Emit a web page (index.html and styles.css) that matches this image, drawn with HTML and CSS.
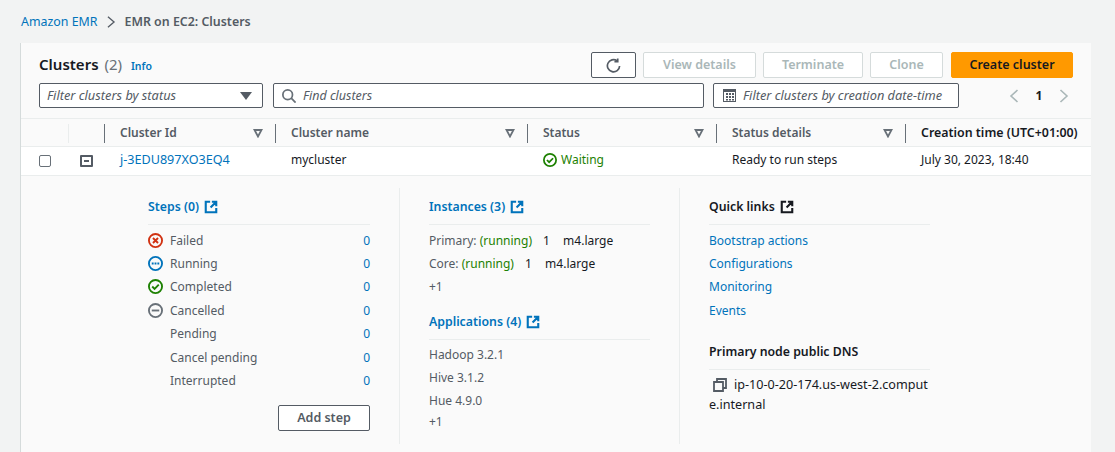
FILE: index.html
```html
<!DOCTYPE html>
<html lang="en">
<head>
<meta charset="UTF-8">
<title>EMR on EC2: Clusters</title>
<link rel="stylesheet" href="styles.css">
</head>
<body>

<svg class="sprites" width="0" height="0">
    <symbol id="ext" viewBox="0 0 16 16"><path d="M7 2H2v12h12V9M9 2h5v5M14 2 7.500 8.500" fill="none" stroke="currentColor" stroke-width="2.400"/></symbol>
    <symbol id="failed" viewBox="0 0 16 16"><circle cx="8" cy="8" r="7" fill="none" stroke="#d13212" stroke-width="2"/><path d="m5.300 5.300 5.400 5.400m0-5.400-5.400 5.400" stroke="#d13212" stroke-width="2"/></symbol>
    <symbol id="running" viewBox="0 0 16 16"><circle cx="8" cy="8" r="7" fill="none" stroke="#0073bb" stroke-width="2"/><path d="M4 8h8" stroke="#0073bb" stroke-width="2" stroke-dasharray="2 1"/></symbol>
    <symbol id="done" viewBox="0 0 16 16"><circle cx="8" cy="8" r="7" fill="none" stroke="#1d8102" stroke-width="2"/><path d="m4.500 8 2.500 2.500 4.500-4.500" fill="none" stroke="#1d8102" stroke-width="2"/></symbol>
    <symbol id="stopped" viewBox="0 0 16 16"><circle cx="8" cy="8" r="7" fill="none" stroke="#687078" stroke-width="2"/><path d="M4 8h8" stroke="#687078" stroke-width="2"/></symbol>
    <symbol id="sort" viewBox="0 0 10 10"><path d="M1.500 2h7L5 8.500z" fill="none" stroke="#687078" stroke-width="1.800"/></symbol>
</svg>

<nav class="crumbs">
    <a class="link" href="#">Amazon EMR</a>
    <svg class="crumb-sep" viewBox="0 0 10 16"><path d="m1.500 2 7 6-7 6" fill="none" stroke="#545b64" stroke-width="1.500"/></svg>
    <span class="crumb-here">EMR on EC2: Clusters</span>
</nav>

<main class="panel">
    <div class="panel-top">
        <h1 class="title">Clusters <span class="count">(2)</span> <a class="info" href="#">Info</a></h1>
        <div class="actions">
            <button class="btn btn-icon" type="button">
                <svg width="15" height="15" viewBox="0 0 16 16"><path d="M14.500 8.500A6.500 6.500 0 1 1 11.800 3M12.500 .5v3.500H9" fill="none" stroke="#545b64" stroke-width="1.800"/></svg>
            </button>
            <button class="btn btn-off btn-view" type="button">View details</button>
            <button class="btn btn-off btn-term" type="button">Terminate</button>
            <button class="btn btn-off btn-clone" type="button">Clone</button>
            <button class="btn btn-main" type="button">Create cluster</button>
        </div>
    </div>

    <div class="filters">
        <div class="field field-status">
            <span class="hint">Filter clusters by status</span>
            <svg class="caret" width="12" height="8" viewBox="0 0 12 8"><path d="M0 0h12L6 8z" fill="#545b64"/></svg>
        </div>
        <div class="field field-find">
            <svg width="14" height="14" viewBox="0 0 16 16"><circle cx="6.500" cy="6.500" r="5.500" fill="none" stroke="#687078" stroke-width="2"/><path d="m10.500 10.500 5 5" stroke="#687078" stroke-width="2"/></svg>
            <span class="hint hint-find">Find clusters</span>
        </div>
        <div class="field field-date">
            <svg width="13" height="13" viewBox="0 0 13 13"><path d="M0 0h13v13H0z" fill="#545b64"/><path d="M1 3h11v9H1z" fill="#fff"/><path d="M3 4h2v2H3zM6 4h2v2H6zM9 4h2v2H9zM3 7h2v2H3zM6 7h2v2H6zM9 7h2v2H9zM3 10h2v1.500H3zM6 10h2v1.500H6zM9 10h2v1.500H9z" fill="#545b64"/></svg>
            <span class="hint">Filter clusters by creation date-time</span>
        </div>
        <div class="pager">
            <svg width="10" height="14" viewBox="0 0 10 14"><path d="M8.500 1 2 7l6.500 6" fill="none" stroke="#aab7b8" stroke-width="1.600"/></svg>
            <b>1</b>
            <svg width="10" height="14" viewBox="0 0 10 14"><path d="m1.500 1 6.500 6-6.500 6" fill="none" stroke="#aab7b8" stroke-width="1.600"/></svg>
        </div>
    </div>

    <div class="grid grid-head">
        <div class="th th-plain"></div>
        <div class="th th-plain th-faint"></div>
        <div class="th">Cluster Id <svg class="sort"><use href="#sort"/></svg></div>
        <div class="th">Cluster name <svg class="sort"><use href="#sort"/></svg></div>
        <div class="th">Status <svg class="sort"><use href="#sort"/></svg></div>
        <div class="th">Status details <svg class="sort"><use href="#sort"/></svg></div>
        <div class="th th-last">Creation time (UTC+01:00) <svg class="sort"><use href="#sort"/></svg></div>
    </div>

    <div class="grid grid-row">
        <div class="td td-check"><span class="checkbox"></span></div>
        <div class="td td-toggle"><span class="toggle"></span></div>
        <div class="td td-id"><a class="link" href="#">j-3EDU897XO3EQ4</a></div>
        <div class="td">mycluster</div>
        <div class="td td-waiting"><svg width="14" height="14"><use href="#done"/></svg> Waiting</div>
        <div class="td">Ready to run steps</div>
        <div class="td">July 30, 2023, 18:40</div>
    </div>

    <div class="detail">
        <section class="col">
            <h2 class="sub sub-link">Steps (0) <svg class="ext"><use href="#ext"/></svg></h2>
            <ul class="list">
                <li><svg class="st"><use href="#failed"/></svg><span>Failed</span><a class="link" href="#">0</a></li>
                <li><svg class="st"><use href="#running"/></svg><span>Running</span><a class="link" href="#">0</a></li>
                <li><svg class="st"><use href="#done"/></svg><span>Completed</span><a class="link" href="#">0</a></li>
                <li><svg class="st"><use href="#stopped"/></svg><span>Cancelled</span><a class="link" href="#">0</a></li>
                <li><i class="st"></i><span>Pending</span><a class="link" href="#">0</a></li>
                <li><i class="st"></i><span>Cancel pending</span><a class="link" href="#">0</a></li>
                <li><i class="st"></i><span>Interrupted</span><a class="link" href="#">0</a></li>
            </ul>
            <div class="add-row"><button class="btn btn-add" type="button">Add step</button></div>
        </section>

        <section class="col">
            <h2 class="sub sub-link">Instances (3) <svg class="ext"><use href="#ext"/></svg></h2>
            <p class="line">Primary: <span class="ok">(running)</span> <span class="val">1</span> <span class="val val-type">m4.large</span></p>
            <p class="line">Core: <span class="ok">(running)</span> <span class="val">1</span> <span class="val val-type">m4.large</span></p>
            <p class="line">+1</p>
            <h2 class="sub sub-link sub-next">Applications (4) <svg class="ext"><use href="#ext"/></svg></h2>
            <p class="line">Hadoop 3.2.1</p>
            <p class="line">Hive 3.1.2</p>
            <p class="line">Hue 4.9.0</p>
            <p class="line line-more">+1</p>
        </section>

        <section class="col">
            <h2 class="sub">Quick links <svg class="ext"><use href="#ext"/></svg></h2>
            <p class="line"><a class="link" href="#">Bootstrap actions</a></p>
            <p class="line"><a class="link" href="#">Configurations</a></p>
            <p class="line"><a class="link" href="#">Monitoring</a></p>
            <p class="line"><a class="link" href="#">Events</a></p>
            <h2 class="sub sub-dns">Primary node public DNS</h2>
            <p class="dns">
                <svg class="copy" width="14" height="14" viewBox="0 0 14 14"><path d="M4 4V1h9v9h-3M1 4h9v9H1z" fill="none" stroke="#545b64" stroke-width="1.800"/></svg>ip-10-0-20-174.us-west-2.compute.internal
            </p>
        </section>
    </div>
</main>

</body>
</html>
```

FILE: styles.css
```css
* {
    box-sizing: border-box;
}

body {
    margin: 0;
    height: 452px;
    overflow: hidden;
    padding: 0 24px 0 20px;
    background-color: #f2f3f3;
    color: #16191f;
    font-family: "Noto Sans", sans-serif;
    font-size: 12px;
}

.sprites {
    display: none;
}

.link {
    color: #0073bb;
    text-decoration: none;
}

.crumbs {
    display: flex;
    align-items: center;
    height: 43px;
    padding-left: 1px;
    color: #545b64;
    font-size: 12.400px;
}

.crumb-sep {
    width: 10px;
    height: 14px;
    margin: 0 9px 0 8px;
}

.crumb-here {
    font-weight: 600;
}

.panel {
    height: 409px;
    background-color: #fafafa;
    border-left: 1px solid #d5dbdb;
}

.panel-top {
    display: flex;
    justify-content: space-between;
    height: 40px;
    padding: 9px 18px 0 18px;
}

.title {
    margin: 2px 0 0;
    font-size: 15px;
    font-weight: 600;
}

.count {
    margin-left: 2px;
    color: #687078;
    font-weight: 400;
}

.info {
    margin-left: 5px;
    color: #0073bb;
    font-size: 10.500px;
    font-weight: 600;
    text-decoration: none;
}

.actions {
    display: flex;
    gap: 7px;
}

.btn {
    height: 26px;
    padding: 0 0 2px;
    border: 1px solid #545b64;
    border-radius: 2px;
    background-color: #fff;
    color: #545b64;
    font-family: inherit;
    font-size: 12.500px;
    font-weight: 600;
}

.btn-icon {
    width: 45px;
    display: flex;
    align-items: center;
    justify-content: center;
    padding: 0 1px 0 0;
}

.btn-off {
    border-color: #d5dbdb;
    color: #aab7b8;
}

.btn-view {
    width: 113px;
}

.btn-term {
    width: 100px;
}

.btn-clone {
    width: 73px;
}

.btn-main {
    width: 122px;
    margin-left: 1px;
    border-color: #ff9900;
    background-color: #ff9900;
    color: #16191f;
}

.filters {
    display: flex;
    align-items: flex-start;
    height: 35px;
    padding-left: 18px;
}

.field {
    display: flex;
    align-items: center;
    height: 25px;
    border: 1px solid #545b64;
    border-radius: 2px;
    background-color: #fff;
}

.hint {
    padding-bottom: 1px;
    color: #545b64;
    font-size: 12.800px;
    font-style: italic;
}

.hint-find {
    padding-bottom: 0;
    font-size: 12.500px;
}

.field-status {
    justify-content: space-between;
    width: 224px;
    padding: 0 10px 0 7px;
}

.field-find {
    gap: 7px;
    width: 431px;
    margin-left: 10px;
    padding-left: 8px;
}

.field-date {
    gap: 7px;
    width: 246px;
    margin-left: 9px;
    padding-left: 9px;
}

.pager {
    display: flex;
    align-items: center;
    justify-content: space-between;
    width: 60px;
    height: 25px;
    margin-left: 50px;
}

.grid {
    display: grid;
    grid-template-columns: 47px 36px 171px 252px 189px 189px 186px;
    overflow: hidden;
    border-top: 1px solid #eaeded;
}

.grid-head {
    height: 28px;
    font-weight: 600;
    color: #545b64;
}

.th {
    position: relative;
    display: flex;
    align-items: center;
    justify-content: space-between;
    margin: 5px 0;
    padding: 0 12px 2px 15px;
    border-left: 1px solid #687078;
    white-space: nowrap;
}

.th-plain {
    border-left: 0;
}

.th-faint {
    border-left: 1px solid #eaeded;
}

.th-last {
    width: 200px;
    padding-right: 0;
    color: #16191f;
    font-size: 12.400px;
}

.sort {
    flex: none;
    width: 10px;
    height: 10px;
}

.grid-row {
    height: 30px;
    background-color: #fff;
    border-bottom: 1px solid #eaeded;
}

.td {
    display: flex;
    align-items: center;
    gap: 4px;
    padding: 0 0 3px 16px;
    white-space: nowrap;
}

.td-check {
    padding: 0 0 0 18px;
}

.td-toggle {
    padding: 0 0 0 12px;
}

.td-id {
    font-size: 12.600px;
}

.checkbox {
    width: 12px;
    height: 12px;
    border: 1px solid #687078;
    border-radius: 2px;
    background-color: #fff;
}

.toggle {
    position: relative;
    width: 13px;
    height: 12px;
    border: 2px solid #545b64;
    border-radius: 1px;
}

.toggle::after {
    content: "";
    position: absolute;
    top: 3px;
    left: 2px;
    width: 5px;
    height: 2px;
    background-color: #545b64;
}

.td-waiting {
    color: #1d8102;
}

.detail {
    display: flex;
    padding: 12px 0 0 127px;
}

.col {
    width: 280px;
    height: 256px;
    padding-right: 29px;
}

.col + .col {
    padding-left: 29px;
    border-left: 1px solid #eaeded;
    width: 280px;
}

.col:first-child {
    width: 251px;
}

.sub {
    height: 25px;
    margin: 0 0 3.500px;
    padding-top: 11px;
    border-bottom: 1px solid #eaeded;
    box-sizing: content-box;
    font-size: 12.300px;
    font-weight: 600;
    line-height: 16px;
}

.sub-link {
    color: #0073bb;
}

.sub-next {
    margin: 15px 0 3px;
    padding-top: 0;
}

.sub-dns {
    margin-top: 14px;
    padding-top: 8px;
}

.ext {
    width: 14px;
    height: 14px;
    margin-left: 2px;
    vertical-align: -3px;
}

.list {
    margin: 0;
    padding: 0;
    list-style: none;
}

.list li {
    display: flex;
    align-items: center;
    height: 23.400px;
    color: #545b64;
}

.list .link {
    margin-left: auto;
}

.st {
    flex: none;
    display: block;
    width: 15px;
    height: 15px;
    margin-right: 7px;
}

.line {
    height: 23.400px;
    margin: 0;
    color: #545b64;
    line-height: 23.400px;
    white-space: nowrap;
}

.line-more {
    height: 18px;
    line-height: 18px;
}

.ok {
    color: #1d8102;
}

.val {
    margin-left: 8px;
    color: #16191f;
}

.val-type {
    margin-left: 10px;
}

.dns {
    margin: 5px 0 0;
    font-size: 12.600px;
    line-height: 20px;
    word-break: break-all;
}

.copy {
    margin: 0 7px 0 4px;
    vertical-align: -3px;
}

.add-row {
    display: flex;
    justify-content: flex-end;
    margin-top: 13px;
}

.btn-add {
    width: 92px;
}
```
